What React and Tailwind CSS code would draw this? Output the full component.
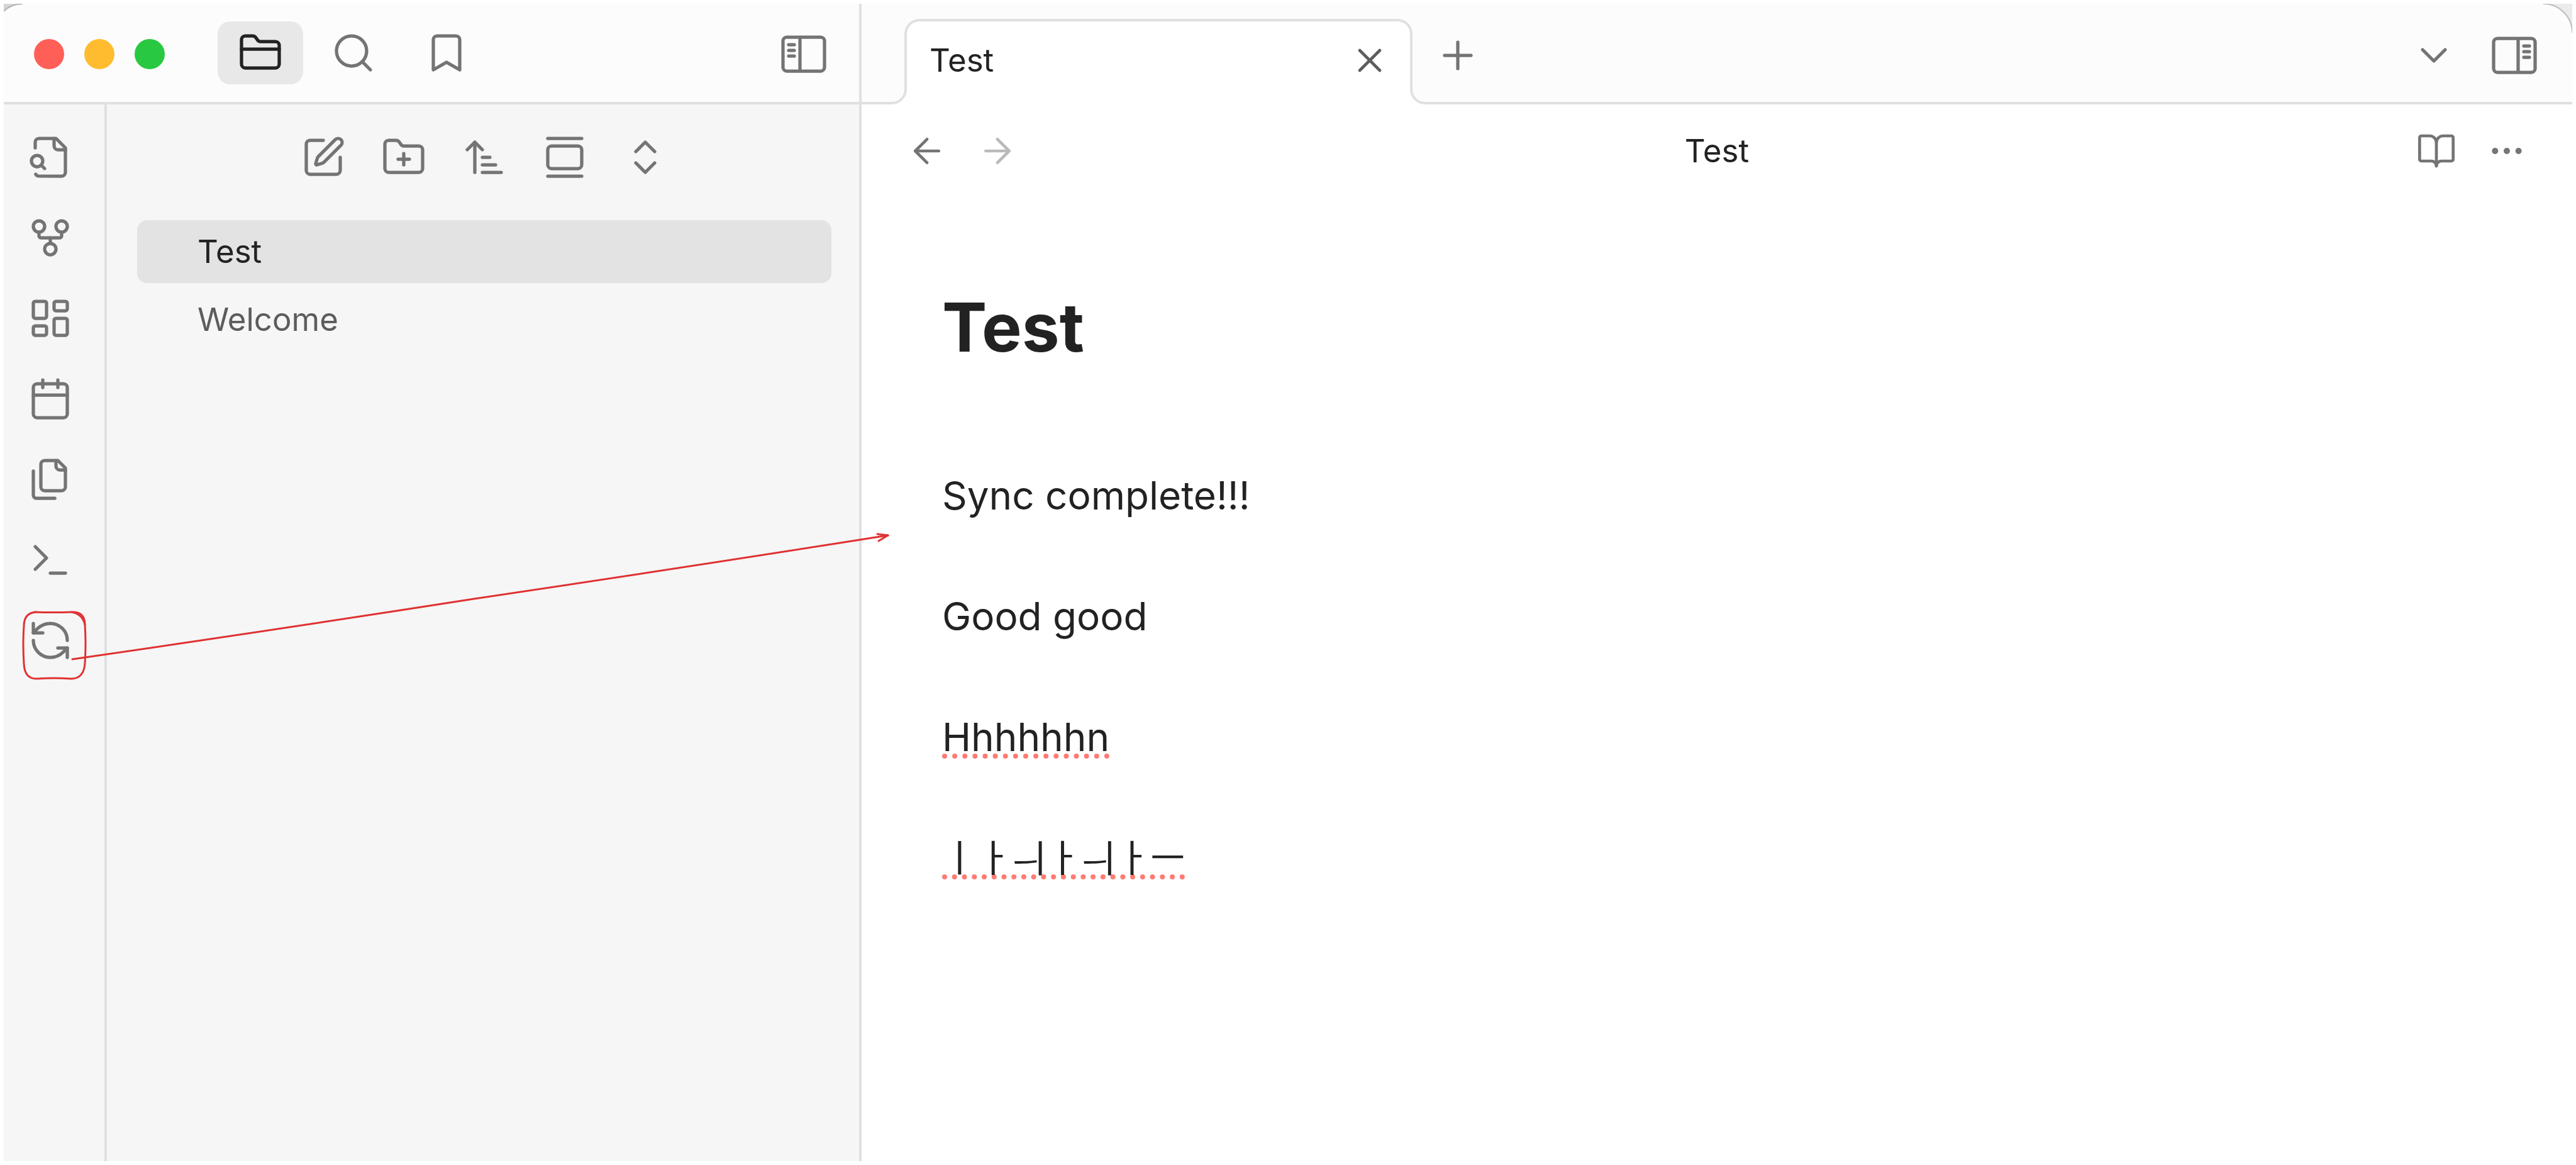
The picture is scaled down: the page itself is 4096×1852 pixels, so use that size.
const ICONS = {
  folder: ["M20 20a2 2 0 0 0 2-2V8a2 2 0 0 0-2-2h-7.9a2 2 0 0 1-1.69-.9L9.6 3.9A2 2 0 0 0 7.93 3H4a2 2 0 0 0-2 2v13a2 2 0 0 0 2 2Z", "M2 10h20"],
  search: ["M11 3a8 8 0 1 0 0 16 8 8 0 1 0 0-16", "m21 21-4.3-4.3"],
  bookmark: ["m19 21-7-4-7 4V5a2 2 0 0 1 2-2h10a2 2 0 0 1 2 2v16z"],
  panelLeft: ["M21 3H3C1.9 3 1 3.9 1 5v14c0 1.1.9 2 2 2h18c1.1 0 2-.9 2-2V5c0-1.1-.9-2-2-2z", "M10 4v16", "M4 7h3", "M4 10h3", "M4 13h3"],
  panelRight: ["M3 3h18c1.1 0 2 .9 2 2v14c0 1.1-.9 2-2 2H3c-1.1 0-2-.9-2-2V5c0-1.1.9-2 2-2z", "M14 4v16", "M20 7h-3", "M20 10h-3", "M20 13h-3"],
  fileSearch: ["M14 2v4a2 2 0 0 0 2 2h4", "M4.268 21a2 2 0 0 0 1.727 1H18a2 2 0 0 0 2-2V7l-5-5H6a2 2 0 0 0-2 2v3", "m9 18-1.5-1.5", "M5 11a3 3 0 1 0 0 6 3 3 0 1 0 0-6"],
  fork: ["M12 15a3 3 0 1 0 0 6 3 3 0 1 0 0-6", "M6 3a3 3 0 1 0 0 6 3 3 0 1 0 0-6", "M18 3a3 3 0 1 0 0 6 3 3 0 1 0 0-6", "M18 9v2c0 .6-.4 1-1 1H7c-.6 0-1-.4-1-1V9", "M12 12v3"],
  dashboard: ["M4 3h5a1 1 0 0 1 1 1v7a1 1 0 0 1-1 1H4a1 1 0 0 1-1-1V4a1 1 0 0 1 1-1z", "M15 3h5a1 1 0 0 1 1 1v3a1 1 0 0 1-1 1h-5a1 1 0 0 1-1-1V4a1 1 0 0 1 1-1z", "M15 12h5a1 1 0 0 1 1 1v7a1 1 0 0 1-1 1h-5a1 1 0 0 1-1-1v-7a1 1 0 0 1 1-1z", "M4 16h5a1 1 0 0 1 1 1v3a1 1 0 0 1-1 1H4a1 1 0 0 1-1-1v-3a1 1 0 0 1 1-1z"],
  calendar: ["M8 2v4", "M16 2v4", "M5 4h14a2 2 0 0 1 2 2v14a2 2 0 0 1-2 2H5a2 2 0 0 1-2-2V6a2 2 0 0 1 2-2z", "M3 10h18"],
  files: ["M20 7h-3a2 2 0 0 1-2-2V2", "M9 18a2 2 0 0 1-2-2V4a2 2 0 0 1 2-2h7l4 4v10a2 2 0 0 1-2 2Z", "M3 7.6v12.8A1.6 1.6 0 0 0 4.6 22h9.8"],
  terminal: ["m4 17 6-6-6-6", "M12 19h8"],
  refresh: ["M21 12a9 9 0 0 0-9-9 9.75 9.75 0 0 0-6.74 2.74L3 8", "M3 3v5h5", "M3 12a9 9 0 0 0 9 9 9.75 9.75 0 0 0 6.74-2.74L21 16", "M16 16h5v5"],
  edit: ["M12 3H5a2 2 0 0 0-2 2v14a2 2 0 0 0 2 2h14a2 2 0 0 0 2-2v-7", "M18.375 2.625a1 1 0 0 1 3 3l-9.013 9.014a2 2 0 0 1-.853.505l-2.873.84a.5.5 0 0 1-.62-.62l.84-2.873a2 2 0 0 1 .506-.852z"],
  folderPlus: ["M12 10v6", "M9 13h6", "M20 20a2 2 0 0 0 2-2V8a2 2 0 0 0-2-2h-7.9a2 2 0 0 1-1.69-.9L9.6 3.9A2 2 0 0 0 7.93 3H4a2 2 0 0 0-2 2v13a2 2 0 0 0 2 2Z"],
  sort: ["m3 8 4-4 4 4", "M7 4v16", "M11 12h4", "M11 16h7", "M11 20h10"],
  gallery: ["M3 2h18", "M5 6h14a2 2 0 0 1 2 2v8a2 2 0 0 1-2 2H5a2 2 0 0 1-2-2V8a2 2 0 0 1 2-2z", "M3 22h18"],
  upDown: ["m7 15 5 5 5-5", "m7 9 5-5 5 5"],
  close: ["M18 6 6 18", "m6 6 12 12"],
  plus: ["M5 12h14", "M12 5v14"],
  chevronDown: ["m6 9 6 6 6-6"],
  arrowLeft: ["m12 19-7-7 7-7", "M19 12H5"],
  arrowRight: ["M5 12h14", "m12 5 7 7-7 7"],
  book: ["M12 7v14", "M3 18a1 1 0 0 1-1-1V4a1 1 0 0 1 1-1h5a4 4 0 0 1 4 4 4 4 0 0 1 4-4h5a1 1 0 0 1 1 1v13a1 1 0 0 1-1 1h-6a3 3 0 0 0-3 3 3 3 0 0 0-3-3z"],
  more: ["M12 11a1 1 0 1 0 0 2 1 1 0 1 0 0-2", "M19 11a1 1 0 1 0 0 2 1 1 0 1 0 0-2", "M5 11a1 1 0 1 0 0 2 1 1 0 1 0 0-2"],
};

function Icon({ name, className = "size-18" }) {
  return (
    <svg viewBox="0 0 24 24" fill="none" stroke="currentColor" strokeWidth="1.75" strokeLinecap="round" strokeLinejoin="round" className={className} aria-hidden="true">
      {ICONS[name].map((d) => (
        <path key={d} d={d} />
      ))}
    </svg>
  );
}

function IconButton({ icon, label, className = "size-26", iconClass }) {
  return (
    <button type="button" aria-label={label} className={`flex shrink-0 items-center justify-center ${className}`}>
      <Icon name={icon} className={iconClass} />
    </button>
  );
}

const RIBBON = [
  ["fileSearch", "Open quick switcher"],
  ["fork", "Open graph view"],
  ["dashboard", "Create new canvas"],
  ["calendar", "Open today's daily note"],
  ["files", "Insert template"],
  ["terminal", "Open command palette"],
  ["refresh", "Sync"],
];

const TOOLS = [
  ["edit", "New note"],
  ["folderPlus", "New folder"],
  ["sort", "Change sort order"],
  ["gallery", "Auto-reveal current file"],
  ["upDown", "Expand all"],
];

function LeftHeader() {
  return (
    <header className="flex h-40 shrink-0 items-center border-b-4 border-[#e0e0e0] bg-[#fcfcfc] pl-12">
      <div className="flex gap-8 pt-1">
        <button type="button" aria-label="Close window" className="size-12 rounded-full bg-[#ff5f57]" />
        <button type="button" aria-label="Minimize window" className="size-12 rounded-full bg-[#febc2e]" />
        <button type="button" aria-label="Zoom window" className="size-12 rounded-full bg-[#28c840]" />
      </div>
      <nav className="ml-21 flex gap-3">
        <IconButton icon="folder" label="Files" className="h-25 w-34 rounded-[20px] bg-[#e8e8e8] text-[#222222]" />
        <IconButton icon="search" label="Search" className="h-25 w-34" />
        <IconButton icon="bookmark" label="Bookmarks" className="h-25 w-34" />
      </nav>
      <IconButton icon="panelLeft" label="Collapse sidebar" className="mr-9 ml-auto size-26 pt-1" />
    </header>
  );
}

function Ribbon() {
  return (
    <nav className="flex w-41 shrink-0 flex-col gap-6 border-r-4 border-[#e0e0e0] pt-8 pl-[22px]">
      {RIBBON.map(([icon, label]) => (
        <div key={icon} className="relative size-26">
          <IconButton icon={icon} label={label} />
          {icon === "refresh" && <Annotation />}
        </div>
      ))}
    </nav>
  );
}

/* Hand-drawn frame around the sync button, with an arrow into the note. */
function Annotation() {
  return (
    <svg viewBox="28 966 1400 120" width="1400" height="120" fill="none" stroke="#e03131" strokeWidth="3" strokeLinecap="round" strokeLinejoin="round" className="pointer-events-none absolute top-0 left-0 z-10 max-w-none overflow-visible" aria-hidden="true">
      <path d="M54 973 Q85 974 114 973 Q135 972 135 993 Q137 1023 135 1055 Q133 1079 113 1079 Q86 1077 58 1079 Q39 1079 38 1055 Q36 1023 38 995 Q38 974 58 973" />
      <path d="M114 973 Q131 976 135 993" />
      <path d="M115 1048 Q440 1001 760 951 Q1090 902 1412 851" />
      <path d="M1395 849 L1412 851 L1397 860" />
    </svg>
  );
}

function FileList() {
  return (
    <section className="flex min-w-0 flex-1 flex-col">
      <div className="mt-8 flex justify-center gap-6 pl-1">
        {TOOLS.map(([icon, label]) => (
          <IconButton key={icon} icon={icon} label={label} />
        ))}
      </div>
      <ul className="mt-12 flex flex-col gap-2 pr-11 pl-12 text-[51px] leading-[100px]">
        <li>
          <button type="button" className="block w-full rounded-2xl bg-[#e3e3e3] pl-24 text-left text-[#222222]">Test</button>
        </li>
        <li>
          <button type="button" className="block w-full rounded-2xl pl-24 text-left text-[#5c5c5c]">Welcome</button>
        </li>
      </ul>
    </section>
  );
}

function TabBar() {
  return (
    <header className="flex h-40 shrink-0 border-b-4 border-[#e0e0e0] bg-[#fcfcfc] pt-6 pl-17">
      <div className="relative -mb-1 flex h-34 w-202 shrink-0 items-center rounded-t-3xl border-x-4 border-t-4 border-[#e0e0e0] bg-white pr-8 pb-2 pl-9">
        <span className="flex-1 text-[51px] leading-[64px] text-[#222222]">Test</span>
        <IconButton icon="close" label="Close tab" className="size-16 text-[#5c5c5c]" iconClass="size-16" />
        <span className="absolute bottom-0 -left-6 size-6 bg-white">
          <span className="block size-full rounded-br-3xl border-r-4 border-b-4 border-[#e0e0e0] bg-[#fcfcfc]" />
        </span>
        <span className="absolute -right-6 bottom-0 size-6 bg-white">
          <span className="block size-full rounded-bl-3xl border-b-4 border-l-4 border-[#e0e0e0] bg-[#fcfcfc]" />
        </span>
      </div>
      <IconButton icon="plus" label="New tab" className="mt-[6px] ml-5 size-26" />
      <div className="mt-[6px] mr-10 ml-auto flex gap-6">
        <IconButton icon="chevronDown" label="Tab list" />
        <IconButton icon="panelRight" label="Expand sidebar" />
      </div>
    </header>
  );
}

function ViewHeader() {
  return (
    <div className="flex h-37 shrink-0 items-center px-13">
      <div className="flex flex-1 gap-2">
        <IconButton icon="arrowLeft" label="Navigate back" iconClass="size-16" />
        <IconButton icon="arrowRight" label="Navigate forward" className="size-26 text-[#bababa]" iconClass="size-16" />
      </div>
      <span className="text-[51px] leading-[64px] text-[#222222]">Test</span>
      <div className="flex flex-1 justify-end gap-2">
        <IconButton icon="book" label="Reading view" iconClass="size-16" />
        <IconButton icon="more" label="More options" iconClass="size-16" />
      </div>
    </div>
  );
}

function Note() {
  return (
    <article className="px-32 pt-34 text-[62px] leading-[96px] text-[#222222]">
      <h1 className="mb-[150px] text-[107px] leading-[140px] font-bold">Test</h1>
      <div className="flex flex-col gap-24">
        <p>Sync complete!!!</p>
        <p>Good good</p>
        <p>
          <span className="underline decoration-[#ff7b72] decoration-dotted decoration-8 underline-offset-4 [text-decoration-skip-ink:none]">Hhhhhhn</span>
        </p>
        <p lang="ko" className="text-[60px]">
          <span className="underline decoration-[#ff7b72] decoration-dotted decoration-8 underline-offset-4 [text-decoration-skip-ink:none]">ㅣㅏㅢㅏㅢㅏㅡ</span>
        </p>
      </div>
    </article>
  );
}

export default function App() {
  return (
    <div className="min-h-screen bg-white p-[6px] font-['Inter','Noto_Sans_CJK_KR',sans-serif] text-[#747474]">
      <div className="relative flex min-h-[calc(100vh-12px)]">
        <aside className="flex w-341 shrink-0 flex-col border-r-4 border-[#e0e0e0] bg-[#f6f6f6]">
          <LeftHeader />
          <div className="flex flex-1">
            <Ribbon />
            <FileList />
          </div>
        </aside>
        <main className="flex min-w-0 flex-1 flex-col bg-white">
          <TabBar />
          <ViewHeader />
          <Note />
        </main>
        <svg viewBox="0 0 34 14" className="absolute top-0 left-0 h-[14px] w-[34px]" aria-hidden="true">
          <path d="M0 0H30Q10 1 0 12Z" fill="#d6d6d6" />
          <path d="M30 0Q10 1 0 12" fill="none" stroke="#b4b4b4" strokeWidth="2" />
        </svg>
        <svg viewBox="0 0 46 46" className="absolute top-0 right-0 size-[46px]" aria-hidden="true">
          <path d="M0 0H46V46A46 46 0 0 0 0 0Z" fill="#ebebeb" />
          <path d="M0 0A46 46 0 0 1 46 46" fill="none" stroke="#bcbcbc" strokeWidth="2" />
        </svg>
      </div>
    </div>
  );
}
